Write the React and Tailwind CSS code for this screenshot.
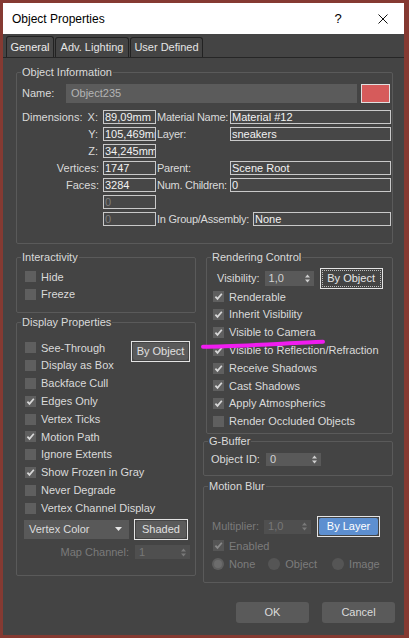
import React from 'react';

const Check = ({ checked, disabled }) => (
  <span
    className={`w-[11px] h-[11px] shrink-0 flex items-center justify-center ${
      disabled ? 'bg-[#555555]' : 'bg-[#5f5f5f]'
    }`}
  >
    {checked && (
      <svg width="9" height="9" viewBox="0 0 9 9">
        <path
          d="M1.4 4.6 L3.5 6.9 L7.8 1.8"
          fill="none"
          stroke={disabled ? '#8a8a8a' : '#d8d8d8'}
          strokeWidth="1.7"
        />
      </svg>
    )}
  </span>
);

const CheckRow = ({ label, checked, disabled, children }) => (
  <div className="h-[17.8px] flex items-center">
    <Check checked={checked} disabled={disabled} />
    <span className={`ml-[5px] whitespace-nowrap ${disabled ? 'text-[#7c7c7c]' : ''}`}>{label}</span>
    {children}
  </div>
);

const Arrows = ({ color = '#cfcfcf' }) => (
  <svg width="5" height="9" viewBox="0 0 5 9" className="shrink-0">
    <path d="M0 3.5 L2.5 0.5 L5 3.5 Z M0 5.5 L2.5 8.5 L5 5.5 Z" fill={color} />
  </svg>
);

const Spinner = ({ value, w, h, disabled }) => (
  <div
    className={`${w} ${h} flex items-center justify-between pl-[4px] pr-[4px] ${
      disabled ? 'bg-[#4f4f4f] text-[#787878]' : 'bg-[#595959] text-[#d2d2d2]'
    }`}
  >
    <span>{value}</span>
    <Arrows color={disabled ? '#7a7a7a' : '#cfcfcf'} />
  </div>
);

const Box = ({ value, w, dim }) => (
  <div
    className={`${w} h-[14px] shrink-0 border border-[#c9c9c9] bg-[#474747] pl-[1px] leading-[12px] overflow-hidden whitespace-nowrap ${
      dim ? 'text-[#7e7e7e]' : 'text-[#f2f2f2]'
    }`}
  >
    {value}
  </div>
);

const Label = ({ w, children }) => (
  <span className={`${w} shrink-0 pl-[1px] whitespace-nowrap tracking-[-0.25px]`}>{children}</span>
);

const Button = ({ label, w, blue }) => (
  <div className={`${w} h-[21px] border border-[#e4e4e4] p-[1px] shrink-0`}>
    <div
      className={`h-full rounded-[2px] flex items-center justify-center ${
        blue ? 'bg-[#5d8fd0] text-white' : 'bg-[#5a5a5a] text-[#e0e0e0]'
      }`}
    >
      {label}
    </div>
  </div>
);

const Group = ({ title, className, children }) => (
  <fieldset className={`border border-[#5a5a5a] rounded-[2px] ${className}`}>
    <legend className="ml-[4px] px-[1px] leading-[13px]">{title}</legend>
    {children}
  </fieldset>
);

export default function App() {
  return (
    <div className="relative w-[409px] h-[638px] bg-[#853a32] pt-[3px] pl-[3px] font-['Liberation_Sans',Arial,sans-serif] text-[11px] text-[#dadada]">
      <div className="w-[401px] h-[632px] bg-[#444444] flex flex-col">
        {/* Title bar */}
        <div className="h-[31px] bg-white flex items-center pl-[9px] pr-[16px] text-black">
          <span className="flex-1 text-[12px]">Object Properties</span>
          <span className="w-[12px] text-center text-[13px]">?</span>
          <svg width="10" height="10" viewBox="0 0 10 10" className="ml-[34px]">
            <path d="M0.5 0.5 L9.5 9.5 M9.5 0.5 L0.5 9.5" stroke="#111" strokeWidth="1" />
          </svg>
        </div>

        {/* Tabs */}
        <div className="h-[24px] flex items-end gap-[1px] pl-[3px] border-b border-[#262626]">
          <div className="w-[48px] h-[21px] border border-b-0 border-[#222222] rounded-t-[3px] bg-[#474747] flex items-center justify-center text-[#ececec]">
            General
          </div>
          <div className="w-[74px] h-[20px] border border-b-0 border-[#222222] rounded-t-[3px] flex items-center justify-center text-[#e4e4e4]">
            Adv. Lighting
          </div>
          <div className="w-[73px] h-[20px] border border-b-0 border-[#222222] rounded-t-[3px] flex items-center justify-center text-[#e4e4e4]">
            User Defined
          </div>
        </div>

        {/* Object Information */}
        <Group title="Object Information" className="ml-[13px] mt-[8px] w-[377px] h-[178px]">
          <div className="pl-[5px] pt-[5px]">
            <div className="h-[19px] flex items-center">
              <span className="w-[44px]">Name:</span>
              <div className="w-[291px] h-full bg-[#5b5b5b] text-[#b4b4b4] pl-[5px] flex items-center">Object235</div>
              <div className="ml-[4px] w-[29px] h-full bg-[#d65b5b] border border-[#e0e0e0]" />
            </div>

            <div className="mt-[7px] flex flex-col gap-[3px]">
              <div className="h-[14px] flex items-center">
                <div className="w-[81px] shrink-0 flex justify-between pr-[5px]">
                  <span>Dimensions:</span>
                  <span>X:</span>
                </div>
                <Box w="w-[53px]" value="89,09mm" />
                <Label w="w-[74px]">Material Name:</Label>
                <Box w="w-[161px]" value="Material #12" />
              </div>
              <div className="h-[14px] flex items-center">
                <span className="w-[81px] shrink-0 text-right pr-[5px]">Y:</span>
                <Box w="w-[53px]" value="105,469mm" />
                <Label w="w-[74px]">Layer:</Label>
                <Box w="w-[161px]" value="sneakers" />
              </div>
              <div className="h-[14px] flex items-center">
                <span className="w-[81px] shrink-0 text-right pr-[5px]">Z:</span>
                <Box w="w-[53px]" value="34,245mm" />
              </div>
              <div className="h-[14px] flex items-center">
                <span className="w-[81px] shrink-0 text-right pr-[4px]">Vertices:</span>
                <Box w="w-[53px]" value="1747" />
                <Label w="w-[74px]">Parent:</Label>
                <Box w="w-[161px]" value="Scene Root" />
              </div>
              <div className="h-[14px] flex items-center">
                <span className="w-[81px] shrink-0 text-right pr-[4px]">Faces:</span>
                <Box w="w-[53px]" value="3284" />
                <Label w="w-[74px]">Num. Children:</Label>
                <Box w="w-[161px]" value="0" />
              </div>
              <div className="h-[14px] flex items-center">
                <span className="w-[81px] shrink-0" />
                <Box w="w-[53px]" value="0" dim />
              </div>
              <div className="h-[14px] flex items-center">
                <span className="w-[81px] shrink-0" />
                <Box w="w-[53px]" value="0" dim />
                <Label w="w-[97px]">In Group/Assembly:</Label>
                <Box w="w-[138px]" value="None" />
              </div>
            </div>
          </div>
        </Group>

        {/* Two columns */}
        <div className="flex items-start mt-[7px] ml-[13px]">
          {/* Left column */}
          <div className="w-[180px] flex flex-col">
            <Group title="Interactivity" className="w-[180px] h-[62px]">
              <div className="pl-[8px] pt-[4px]">
                <CheckRow label="Hide" />
                <CheckRow label="Freeze" />
              </div>
            </Group>

            <Group title="Display Properties" className="mt-[3px] w-[180px] h-[260px]">
              <div className="pl-[8px] pt-[10px]">
                <div className="h-[17.8px] flex items-center">
                  <Check />
                  <span className="ml-[5px]">See-Through</span>
                  <div className="ml-auto mr-[5px] mt-[7px]">
                    <Button label="By Object" w="w-[59px]" />
                  </div>
                </div>
                <CheckRow label="Display as Box" />
                <CheckRow label="Backface Cull" />
                <CheckRow label="Edges Only" checked />
                <CheckRow label="Vertex Ticks" />
                <CheckRow label="Motion Path" checked />
                <CheckRow label="Ignore Extents" />
                <CheckRow label="Show Frozen in Gray" checked />
                <CheckRow label="Never Degrade" />
                <CheckRow label="Vertex Channel Display" />
              </div>
              <div className="pl-[7px] mt-[2px] flex items-center">
                <div className="w-[105px] h-[19px] bg-[#595959] flex items-center justify-between pl-[5px] pr-[7px] text-[#dcdcdc]">
                  <span>Vertex Color</span>
                  <svg width="7" height="4" viewBox="0 0 7 4">
                    <path d="M0 0 L7 0 L3.5 4 Z" fill="#e6e6e6" />
                  </svg>
                </div>
                <div className="ml-[5px]">
                  <Button label="Shaded" w="w-[54px]" />
                </div>
              </div>
              <div className="pl-[7px] mt-[4px] flex items-center">
                <span className="w-[105px] text-right text-[#7a7a7a]">Map Channel:</span>
                <div className="ml-[6px]">
                  <Spinner value="1" w="w-[55px]" h="h-[14px]" disabled />
                </div>
              </div>
            </Group>
          </div>

          {/* Right column */}
          <div className="ml-[7px] w-[190px] flex flex-col">
            <Group title="Rendering Control" className="ml-[3px] w-[187px] h-[183px]">
              <div className="pt-[5px]">
                <div className="h-[19px] flex items-center pl-[10px]">
                  <span>Visibility:</span>
                  <div className="ml-[5px]">
                    <Spinner value="1,0" w="w-[49px]" h="h-[15px]" />
                  </div>
                  <div className="ml-[6px] w-[63px] h-[21px] border border-[#e4e4e4] p-[1px]">
                    <div className="h-full border border-dotted border-[#bdbdbd] flex items-center justify-center text-[#e6e6e6]">
                      By Object
                    </div>
                  </div>
                </div>
                <div className="pl-[6px]">
                  <CheckRow label="Renderable" checked />
                  <CheckRow label="Inherit Visibility" checked />
                  <CheckRow label="Visible to Camera" checked />
                  <CheckRow label="Visible to Reflection/Refraction" checked />
                  <CheckRow label="Receive Shadows" checked />
                  <CheckRow label="Cast Shadows" checked />
                  <CheckRow label="Apply Atmospherics" checked />
                  <CheckRow label="Render Occluded Objects" />
                </div>
              </div>
            </Group>

            <Group title="G-Buffer" className="mt-[1px] w-[190px] h-[41px]">
              <div className="pl-[7px] pt-[3px] flex items-center">
                <span>Object ID:</span>
                <div className="ml-[6px]">
                  <Spinner value="0" w="w-[55px]" h="h-[13px]" />
                </div>
              </div>
            </Group>

            <Group title="Motion Blur" className="mt-[4px] w-[190px] h-[103px]">
              <div className="pt-[23px]">
                <div className="h-[21px] flex items-center pl-[8px]">
                  <span className="text-[#7a7a7a]">Multiplier:</span>
                  <div className="ml-[5px]">
                    <Spinner value="1,0" w="w-[47px]" h="h-[14px]" disabled />
                  </div>
                  <div className="ml-[6px]">
                    <Button label="By Layer" w="w-[63px]" blue />
                  </div>
                </div>
                <div className="pl-[9px]">
                  <CheckRow label="Enabled" checked disabled />
                </div>
                <div className="h-[18px] flex items-center pl-[8px] text-[#7c7c7c]">
                  <span className="w-[12px] h-[12px] shrink-0 rounded-full bg-[#5e5e5e] flex items-center justify-center">
                    <span className="w-[8px] h-[8px] rounded-full bg-[#6c6c6c]" />
                  </span>
                  <span className="ml-[5px]">None</span>
                  <span className="ml-[13px] w-[12px] h-[12px] shrink-0 rounded-full bg-[#555555]" />
                  <span className="ml-[5px]">Object</span>
                  <span className="ml-[15px] w-[12px] h-[12px] shrink-0 rounded-full bg-[#555555]" />
                  <span className="ml-[5px]">Image</span>
                </div>
              </div>
            </Group>
          </div>
        </div>

        {/* Bottom buttons */}
        <div className="mt-[19px] flex justify-end gap-[13px] pr-[9px]">
          <div className="w-[73px] h-[21px] rounded-[3px] bg-[#5a5a5a] flex items-center justify-center text-[#dcdcdc]">OK</div>
          <div className="w-[73px] h-[21px] rounded-[3px] bg-[#5a5a5a] flex items-center justify-center text-[#dcdcdc]">Cancel</div>
        </div>
      </div>

      {/* Magenta pen stroke */}
      <svg className="absolute left-0 top-0 pointer-events-none" width="409" height="638">
        <path d="M203 346.8 C 240 346.5 290 343 323 341.8" fill="none" stroke="#f01cf0" strokeWidth="4" strokeLinecap="round" />
      </svg>
    </div>
  );
}
